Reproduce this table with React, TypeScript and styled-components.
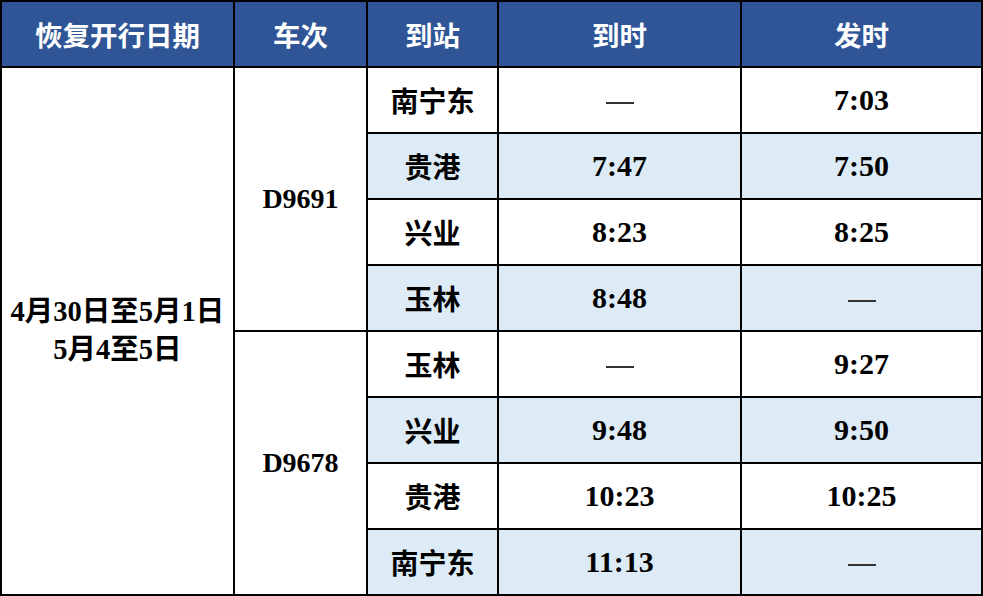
import React from "react";
import styled, { createGlobalStyle } from "styled-components";

const Global = createGlobalStyle`
  html, body { margin: 0; padding: 0; background: #fff; }
`;

const Table = styled.table`
  border-collapse: collapse;
  table-layout: fixed;
  width: 981px;
  font-family: "Liberation Serif", "Noto Sans CJK SC", serif;
  font-weight: 700;
  color: #000;
`;

const HeadCell = styled.th`
  background: #2f5597;
  color: #fff;
  border: 2px solid #000;
  height: 64px;
  padding: 0;
  font-size: 27.5px;
  font-weight: 700;
  text-align: center;
  vertical-align: middle;
  font-family: "Noto Sans CJK SC", sans-serif;
`;

const Cell = styled.td<{ $alt?: boolean; $cjk?: boolean; $size?: number }>`
  background: ${(p) => (p.$alt ? "#ddebf7" : "#fff")};
  border: 2px solid #000;
  height: 64px;
  padding: 0;
  text-align: center;
  vertical-align: middle;
  font-size: ${(p) => p.$size ?? 30}px;
  font-family: ${(p) =>
    p.$cjk
      ? `"Noto Sans CJK SC", sans-serif`
      : `"Liberation Serif", "Noto Sans CJK SC", serif`};
`;

const DateText = styled.div`
  font-size: 28.5px;
  line-height: 38px;
  font-family: "Liberation Serif", "Noto Sans CJK SC", serif;
  white-space: nowrap;
`;

const Dash = styled.span`
  display: inline-block;
  width: 28px;
  height: 2px;
  background: #333;
  vertical-align: middle;
`;

type Row = { station: string; arr: string; dep: string };

const trains: { code: string; rows: Row[] }[] = [
  {
    code: "D9691",
    rows: [
      { station: "南宁东", arr: "", dep: "7:03" },
      { station: "贵港", arr: "7:47", dep: "7:50" },
      { station: "兴业", arr: "8:23", dep: "8:25" },
      { station: "玉林", arr: "8:48", dep: "" },
    ],
  },
  {
    code: "D9678",
    rows: [
      { station: "玉林", arr: "", dep: "9:27" },
      { station: "兴业", arr: "9:48", dep: "9:50" },
      { station: "贵港", arr: "10:23", dep: "10:25" },
      { station: "南宁东", arr: "11:13", dep: "" },
    ],
  },
];

const Time = ({ v }: { v: string }) => (v ? <>{v}</> : <Dash />);

export default function App() {
  let idx = 0;
  return (
    <>
      <Global />
      <Table>
        <colgroup>
          <col style={{ width: 233 }} />
          <col style={{ width: 133 }} />
          <col style={{ width: 131 }} />
          <col style={{ width: 243 }} />
          <col style={{ width: 241 }} />
        </colgroup>
        <thead>
          <tr>
            <HeadCell>恢复开行日期</HeadCell>
            <HeadCell>车次</HeadCell>
            <HeadCell>到站</HeadCell>
            <HeadCell>到时</HeadCell>
            <HeadCell>发时</HeadCell>
          </tr>
        </thead>
        <tbody>
          {trains.map((t, ti) =>
            t.rows.map((r, ri) => {
              const alt = idx++ % 2 === 1;
              return (
                <tr key={`${ti}-${ri}`}>
                  {ti === 0 && ri === 0 && (
                    <Cell rowSpan={8}>
                      <DateText>
                        4月30日至5月1日
                        <br />
                        5月4至5日
                      </DateText>
                    </Cell>
                  )}
                  {ri === 0 && (
                    <Cell rowSpan={4} $size={28}>
                      {t.code}
                    </Cell>
                  )}
                  <Cell $alt={alt} $cjk $size={28}>
                    {r.station}
                  </Cell>
                  <Cell $alt={alt}>
                    <Time v={r.arr} />
                  </Cell>
                  <Cell $alt={alt}>
                    <Time v={r.dep} />
                  </Cell>
                </tr>
              );
            })
          )}
        </tbody>
      </Table>
    </>
  );
}
